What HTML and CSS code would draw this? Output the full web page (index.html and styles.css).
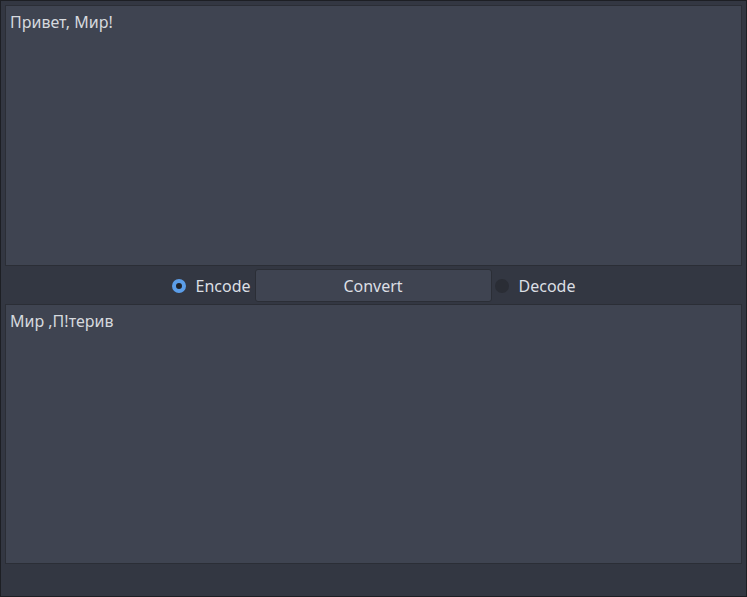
FILE: index.html
```html
<!DOCTYPE html>
<html>
<head>
<meta charset="utf-8">
<link rel="stylesheet" href="styles.css">
</head>
<body>
<div class="window">
  <div class="edit edit-top">Привет, Мир!</div>
  <div class="controls">
    <label class="radio radio-left"><span class="dot on"></span><span class="label">Encode</span></label>
    <button class="convert">Convert</button>
    <label class="radio radio-right"><span class="dot"></span><span class="label">Decode</span></label>
  </div>
  <div class="edit edit-bottom">Мир ,П!терив</div>
</div>
</body>
</html>
```
FILE: styles.css
```css
html, body {
  margin: 0;
  padding: 0;
  background: #1d1f24;
}
.window {
  box-sizing: border-box;
  width: 747px;
  height: 597px;
  border: 1px solid #1d1f24;
  background: #333742;
  padding: 4px 4px 0 4px;
  display: flex;
  flex-direction: column;
  font-family: "Noto Sans", sans-serif;
  font-size: 16px;
  color: #dcdfe4;
}
.edit {
  box-sizing: border-box;
  background: #3f4451;
  border: 1px solid #2b2e36;
  padding: 6px 4px;
  line-height: 20px;
  color: #d6d9de;
}
.edit-top { height: 261px; }
.edit-bottom { height: 260px; }
.controls {
  box-sizing: border-box;
  height: 38px;
  padding-top: 1px;
  display: flex;
  justify-content: center;
  align-items: center;
}
.radio {
  display: flex;
  align-items: center;
  gap: 10px;
}
.radio-left { margin-right: 4px; }
.radio-right { margin-left: 3px; }
.dot {
  box-sizing: border-box;
  width: 14px;
  height: 14px;
  border-radius: 50%;
  background: #2a2d35;
}
.dot.on {
  background: #1f2228;
  border: 4px solid #5b9de8;
}
.label { color: #dcdfe4; }
.convert {
  box-sizing: border-box;
  width: 237px;
  height: 33px;
  background: #3f4451;
  border: 1px solid #2b2e36;
  border-radius: 3px;
  color: #dcdfe4;
  font-family: "Noto Sans", sans-serif;
  font-size: 16px;
  padding: 0;
}
```
